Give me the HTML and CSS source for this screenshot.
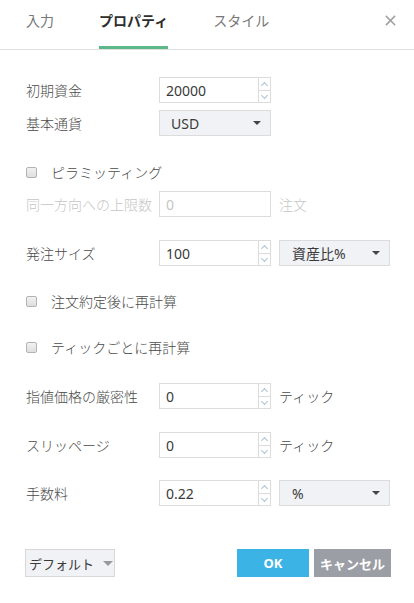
FILE: index.html
```html
<!DOCTYPE html>
<html lang="ja">
<head>
<meta charset="utf-8">
<title>プロパティ</title>
<link rel="stylesheet" href="styles.css">
</head>
<body>
<div class="dialog">
  <div class="header">
    <div class="tabs">
      <span class="tab">入力</span>
      <span class="tab active">プロパティ</span>
      <span class="tab">スタイル</span>
    </div>
    <span class="close">
      <svg width="11" height="11" viewBox="0 0 11 11"><path d="M1.5 1.5 L9.5 9.5 M9.5 1.5 L1.5 9.5" stroke="#a0a0a0" stroke-width="1.6" stroke-linecap="square"/></svg>
    </span>
  </div>

  <div class="content">
    <div class="row r1">
      <span class="label">初期資金</span>
      <div class="num"><span class="val">20000</span><span class="spin"><i class="up"></i><i class="down"></i></span></div>
    </div>
    <div class="row r2">
      <span class="label">基本通貨</span>
      <div class="select"><span class="sval">USD</span><span class="caret"></span></div>
    </div>
    <div class="row chk r3">
      <span class="box"></span><span class="ctext">ピラミッティング</span>
    </div>
    <div class="row r4 disabled">
      <span class="label">同一方向への上限数</span>
      <div class="num plain"><span class="val">0</span></div>
      <span class="unit">注文</span>
    </div>
    <div class="row r5">
      <span class="label">発注サイズ</span>
      <div class="num"><span class="val">100</span><span class="spin"><i class="up"></i><i class="down"></i></span></div>
      <div class="select side"><span class="sval">資産比%</span><span class="caret"></span></div>
    </div>
    <div class="row chk r6">
      <span class="box"></span><span class="ctext">注文約定後に再計算</span>
    </div>
    <div class="row chk r7">
      <span class="box"></span><span class="ctext">ティックごとに再計算</span>
    </div>
    <div class="row r8">
      <span class="label">指値価格の厳密性</span>
      <div class="num"><span class="val">0</span><span class="spin"><i class="up"></i><i class="down"></i></span></div>
      <span class="unit">ティック</span>
    </div>
    <div class="row r9">
      <span class="label">スリッページ</span>
      <div class="num"><span class="val">0</span><span class="spin"><i class="up"></i><i class="down"></i></span></div>
      <span class="unit">ティック</span>
    </div>
    <div class="row r10">
      <span class="label">手数料</span>
      <div class="num"><span class="val">0.22</span><span class="spin"><i class="up"></i><i class="down"></i></span></div>
      <div class="select side"><span class="sval">%</span><span class="caret"></span></div>
    </div>
  </div>

  <div class="footer">
    <div class="btn default">デフォルト<span class="caret grey"></span></div>
    <div class="actions">
      <div class="btn ok">OK</div>
      <div class="btn cancel">キャンセル</div>
    </div>
  </div>
</div>
</body>
</html>
```

FILE: styles.css
```css
* { box-sizing: border-box; }
html, body { margin: 0; padding: 0; background: #fff; }
body {
  width: 414px;
  height: 603px;
  overflow: hidden;
  font-family: "Noto Sans", "Noto Sans CJK JP", sans-serif;
  font-size: 14px;
  font-weight: 300;
  color: #4a4a4a;
}
.dialog { width: 414px; }

.header {
  height: 50px;
  border-bottom: 1px solid #e0e0e0;
  display: flex;
  justify-content: space-between;
  align-items: flex-start;
}
.tabs { display: flex; gap: 45px; padding-left: 26px; height: 49px; }
.tab {
  display: flex;
  align-items: center;
  height: 49px;
  color: #777;
  font-size: 14px;
  font-weight: 400;
  line-height: 1;
  padding-bottom: 6px;
  border-bottom: 3px solid transparent;
  font-family: "Noto Sans CJK JP", sans-serif;
}
.tab.active {
  color: #2e2e2e;
  font-weight: 700;
  border-bottom-color: #5cb889;
}
.close { margin: 15px 18px 0 0; display: block; width: 11px; height: 11px; line-height: 0; }

.content { padding: 0 0 0 26px; }
.row { display: flex; align-items: center; height: 26px; }
.label { width: 133px; flex: none; font-family: "Noto Sans CJK JP", sans-serif; }
.r1 { margin-top: 27px; }
.r2 { margin-top: 7px; }
.r3 { margin-top: 23px; }
.r4 { margin-top: 6px; }
.r5 { margin-top: 23px; }
.r6 { margin-top: 22px; }
.r7 { margin-top: 20px; }
.r8 { margin-top: 23px; }
.r9 { margin-top: 23px; }
.r10 { margin-top: 22px; }

.num {
  width: 112px;
  height: 26px;
  border: 1px solid #dcdcdc;
  background: #fff;
  display: flex;
  align-items: stretch;
}
.val { flex: 1; padding-left: 6px; display: flex; align-items: center; color: #3a3a3a; font-weight: 400; }
.spin { width: 12px; border-left: 1px solid #dcdcdc; display: flex; flex-direction: column; }
.spin i { flex: 1; position: relative; display: block; }
.spin i.up { border-bottom: 1px solid #dcdcdc; }
.spin i::after {
  content: "";
  position: absolute;
  left: 3px;
  width: 4px;
  height: 4px;
  border-left: 1px solid #a9c3d3;
  border-top: 1px solid #a9c3d3;
}
.spin i.up::after { top: 5px; transform: rotate(45deg); }
.spin i.down::after { top: 2px; transform: rotate(225deg); }

.select {
  width: 112px;
  height: 26px;
  border: 1px solid #dcdcdc;
  background: #f1f2f6;
  display: flex;
  align-items: center;
  justify-content: space-between;
  padding: 0 9px 0 11px;
  color: #3a3a3a;
}
.select.side { width: 111px; margin-left: 8px; padding-left: 12px; }
.sval { font-family: "Noto Sans", "Noto Sans CJK JP", sans-serif; font-weight: 400; }
.caret {
  width: 0; height: 0;
  border-left: 4px solid transparent;
  border-right: 4px solid transparent;
  border-top: 4px solid #444;
}
.caret.grey { border-top-color: #999; border-left-width: 5px; border-right-width: 5px; border-top-width: 5px; margin-left: 9px; }

.unit { margin-left: 8px; font-family: "Noto Sans CJK JP", sans-serif; }
.disabled .label, .disabled .unit { color: #c6c6c6; }
.disabled .val { color: #c6c6c6; }

.chk .box {
  width: 11px; height: 11px;
  border: 1px solid #b3b3b3;
  border-radius: 2px;
  background: linear-gradient(#f2f2f2, #dedede);
  margin-right: 14px;
  flex: none;
}
.ctext { font-family: "Noto Sans CJK JP", sans-serif; }

.footer {
  margin-top: 43px;
  padding: 0 23px 0 25px;
  display: flex;
  justify-content: space-between;
}
.actions { display: flex; gap: 5px; }
.btn {
  height: 28px;
  display: flex;
  align-items: center;
  justify-content: center;
  font-size: 13px;
  font-family: "Noto Sans CJK JP", sans-serif;
}
.btn.default {
  width: 90px;
  background: #f1f2f6;
  border: 1px solid #d7d7d7;
  color: #3a3a3a;
  padding-left: 2px;
  font-weight: 400;
}
.btn.ok { width: 72px; background: #3bb3e4; color: #fff; font-weight: 700; font-family: "Noto Sans", sans-serif; }
.btn.cancel { width: 77px; background: #9b9ea5; color: #fff; font-weight: 700; }
```
